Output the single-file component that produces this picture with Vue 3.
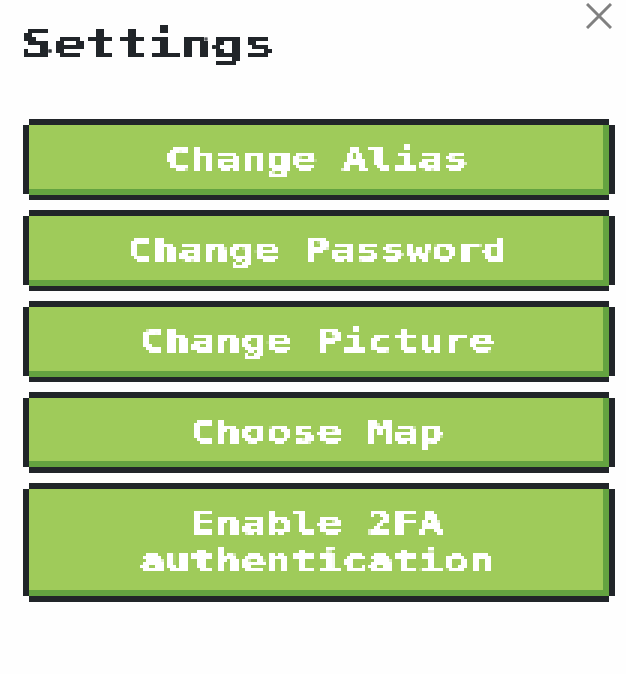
<script setup>
const actions = [
  { lines: ['Change Alias'] },
  { lines: ['Change Password'] },
  { lines: ['Change Picture'] },
  { lines: ['Choose Map'] },
  { lines: ['Enable 2FA', 'authentication'] },
]
</script>

<template>
  <main class="settings">
    <svg class="defs" width="0" height="0" aria-hidden="true">
      <filter id="pixel" x="0" y="0" width="100%" height="100%" color-interpolation-filters="sRGB">
        <feFlood x="1" y="1" width="1" height="1" flood-color="#000" />
        <feComposite width="3" height="3" />
        <feTile result="grid" />
        <feComponentTransfer in="SourceGraphic" result="crisp">
          <feFuncA type="linear" slope="4" intercept="-1.6" />
        </feComponentTransfer>
        <feComposite in="crisp" in2="grid" operator="in" />
        <feMorphology operator="dilate" radius="1" />
      </filter>
      <filter id="pixel-large" x="0" y="0" width="100%" height="100%" color-interpolation-filters="sRGB">
        <feFlood x="1" y="1" width="1" height="1" flood-color="#000" />
        <feComposite width="4" height="4" />
        <feTile result="grid" />
        <feComponentTransfer in="SourceGraphic" result="crisp">
          <feFuncA type="linear" slope="4" intercept="-1.6" />
        </feComponentTransfer>
        <feComposite in="crisp" in2="grid" operator="in" />
        <feMorphology operator="dilate" radius="1" result="block" />
        <feOffset in="block" dx="1" dy="0" result="right" />
        <feOffset in="block" dx="0" dy="1" result="down" />
        <feOffset in="block" dx="1" dy="1" result="diagonal" />
        <feMerge>
          <feMergeNode in="block" />
          <feMergeNode in="right" />
          <feMergeNode in="down" />
          <feMergeNode in="diagonal" />
        </feMerge>
      </filter>
    </svg>
    <header class="header">
      <div class="heading">
        <h1 class="title">Settings</h1>
      </div>
      <button class="close" aria-label="Close">
        <svg width="26" height="26" viewBox="0 0 26 26" fill="none" stroke="#808080" stroke-width="3">
          <path d="M1 1L25 25M25 1L1 25" />
        </svg>
      </button>
    </header>
    <nav class="actions">
      <button v-for="action in actions" :key="action.lines[0]" class="action">
        <span class="label">
          <span v-for="line in action.lines" :key="line" class="line">{{ line }}</span>
        </span>
      </button>
    </nav>
  </main>
</template>

<style>
body {
  margin: 0;
  background: #fefefe;
}
</style>

<style scoped>
.settings {
  box-sizing: border-box;
  height: 674px;
  padding: 0 14px 0 22px;
  font-family: 'DejaVu Sans Mono', 'Liberation Mono', monospace;
  font-weight: 700;
  color: #212529;
}
.defs {
  position: absolute;
}
.header {
  display: flex;
  justify-content: space-between;
  align-items: flex-start;
  height: 125px;
}
.heading {
  width: 270px;
  margin: 1px 0 0 -2px;
  padding-left: 1px;
  filter: url(#pixel-large);
}
.title {
  width: 190px;
  margin: 20px 0 0;
  font-size: 38.4px;
  line-height: 46px;
  font-weight: 700;
  white-space: pre;
  transform: scaleX(1.37);
  transform-origin: left;
  -webkit-text-stroke: 0.2px currentColor;
}
.close {
  display: flex;
  margin: 3px 0 0;
  padding: 0;
  border: 0;
  background: none;
}
.actions {
  display: flex;
  flex-direction: column;
  gap: 22px;
  padding-left: 7px;
}
.action {
  width: 580px;
  margin: 0;
  padding: 13px 4px 16px 0;
  border: 0;
  background: #9fcb5a;
  color: #fff;
  font: inherit;
  font-size: 31.5px;
  line-height: 38px;
  box-shadow:
    inset -6px -5px #64a340,
    0 1px #64a340,
    0 6px #212529,
    0 -6px #212529,
    6px 0 #212529,
    -6px 0 #212529;
}
.action:nth-child(n + 4) {
  box-shadow:
    inset -6px -6px #64a340,
    0 6px #212529,
    0 -6px #212529,
    6px 0 #212529,
    -6px 0 #212529;
}
.label {
  display: flex;
  flex-direction: column;
  align-items: center;
  padding-top: 2px;
  filter: url(#pixel);
}
.line {
  white-space: pre;
  transform: scaleX(1.335);
  -webkit-text-stroke: 0.4px currentColor;
}
</style>
